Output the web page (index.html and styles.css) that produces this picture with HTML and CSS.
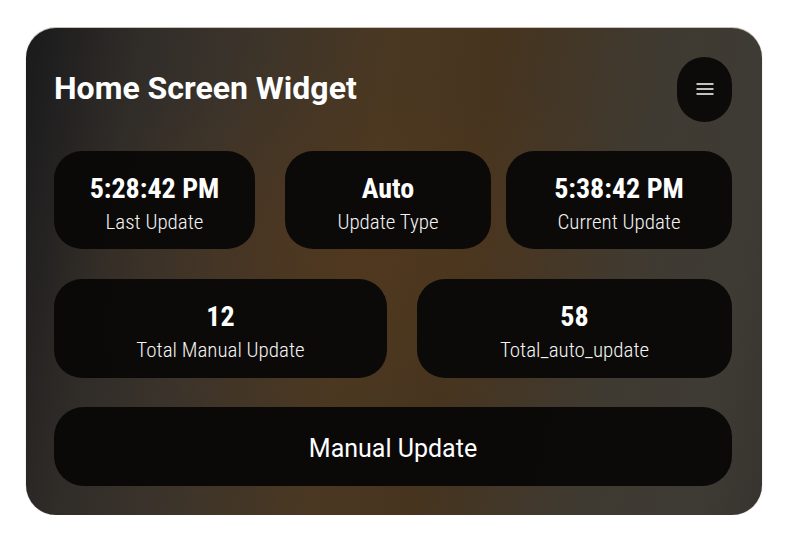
FILE: index.html
```html
<!DOCTYPE html>
<html lang="en">
<head>
<meta charset="utf-8">
<title>Home Screen Widget</title>
<link rel="stylesheet" href="styles.css">
</head>
<body>
<main class="widget">
  <header class="widget-header">
    <h1 class="widget-title">Home Screen Widget</h1>
    <button class="menu-btn" aria-label="Menu">
      <svg width="18" height="12" viewBox="0 0 18 12" aria-hidden="true">
        <path d="M0.5 1H17.5M0.5 6H17.5M0.5 11H17.5" stroke="#ffffff" stroke-width="1.6" fill="none"/>
      </svg>
    </button>
  </header>
  <section class="row row-three">
    <div class="tile tile-a">
      <div class="tile-value">5:28:42 PM</div>
      <div class="tile-label">Last Update</div>
    </div>
    <div class="tile tile-b">
      <div class="tile-value">Auto</div>
      <div class="tile-label">Update Type</div>
    </div>
    <div class="tile tile-c">
      <div class="tile-value">5:38:42 PM</div>
      <div class="tile-label">Current Update</div>
    </div>
  </section>
  <section class="row row-two">
    <div class="tile">
      <div class="tile-value">12</div>
      <div class="tile-label">Total Manual Update</div>
    </div>
    <div class="tile">
      <div class="tile-value">58</div>
      <div class="tile-label">Total_auto_update</div>
    </div>
  </section>
  <button class="update-btn">Manual Update</button>
</main>
</body>
</html>
```
FILE: styles.css
```css
* { box-sizing: border-box; }

html, body {
  margin: 0;
  padding: 0;
  background: #ffffff;
}

body {
  font-family: Roboto, "Liberation Sans", sans-serif;
  color: #ffffff;
}

.widget {
  margin: 28px 30px 0 26px;
  width: 736px;
  height: 487px;
  border-radius: 30px;
  padding: 29px 30px 29px 28px;
  display: flex;
  flex-direction: column;
  gap: 29px;
  background:
    radial-gradient(ellipse 60% 55% at 45% 45%, rgba(84, 56, 28, 0.6), rgba(84, 56, 28, 0) 70%),
    linear-gradient(100deg, #1a1a1c 0%, #302c28 14%, #3a332b 25%, #4a3822 45%, #46341f 58%, #3f3a31 78%, #3e3b35 92%, #37332e 100%);
  box-shadow: 0 -1px 0 rgba(190, 180, 168, 0.8), 0 0 1px rgba(0, 0, 0, 0.5);
  overflow: hidden;
}

.widget-header {
  display: flex;
  align-items: center;
  justify-content: space-between;
  height: 65px;
}

.widget-title {
  margin: 0;
  font-size: 32px;
  font-weight: 700;
  line-height: 1;
  margin-top: -3px;
}

.menu-btn {
  width: 55px;
  height: 65px;
  border: none;
  border-radius: 28px;
  background: #0c0b09;
  display: flex;
  align-items: center;
  justify-content: center;
  padding: 0;
}

.menu-btn svg { display: block; margin-top: -1px; }

.row {
  display: flex;
}

.row-three .tile { height: 98px; }
.tile-a { width: 201px; margin-right: 30px; }
.tile-b { width: 206px; margin-right: 15px; }
.tile-c { flex: 1; }

.row-two { gap: 30px; margin-top: 1px; }
.row-two .tile { height: 99px; }
.row-two .tile:first-child { width: 333px; }
.row-two .tile:last-child { flex: 1; }

.tile {
  background: rgba(9, 8, 7, 0.96);
  border-radius: 28px;
  padding-top: 6px;
  display: flex;
  flex-direction: column;
  align-items: center;
  justify-content: center;
  font-family: "Roboto Condensed", Roboto, "Liberation Sans Narrow", sans-serif;
  font-stretch: condensed;
}

.tile-value {
  font-size: 28px;
  font-weight: 700;
  line-height: 33px;
}

.tile-label {
  font-size: 21px;
  font-weight: 300;
  line-height: 25px;
  margin-top: 5px;
  color: #f4f4f4;
}

.update-btn {
  height: 79px;
  width: 100%;
  border: none;
  border-radius: 30px;
  background: rgba(9, 8, 7, 0.97);
  color: #ffffff;
  font-family: Roboto, "Liberation Sans", sans-serif;
  font-size: 25px;
  font-weight: 400;
  padding: 3px 0 0;
  flex-shrink: 0;
}
```
